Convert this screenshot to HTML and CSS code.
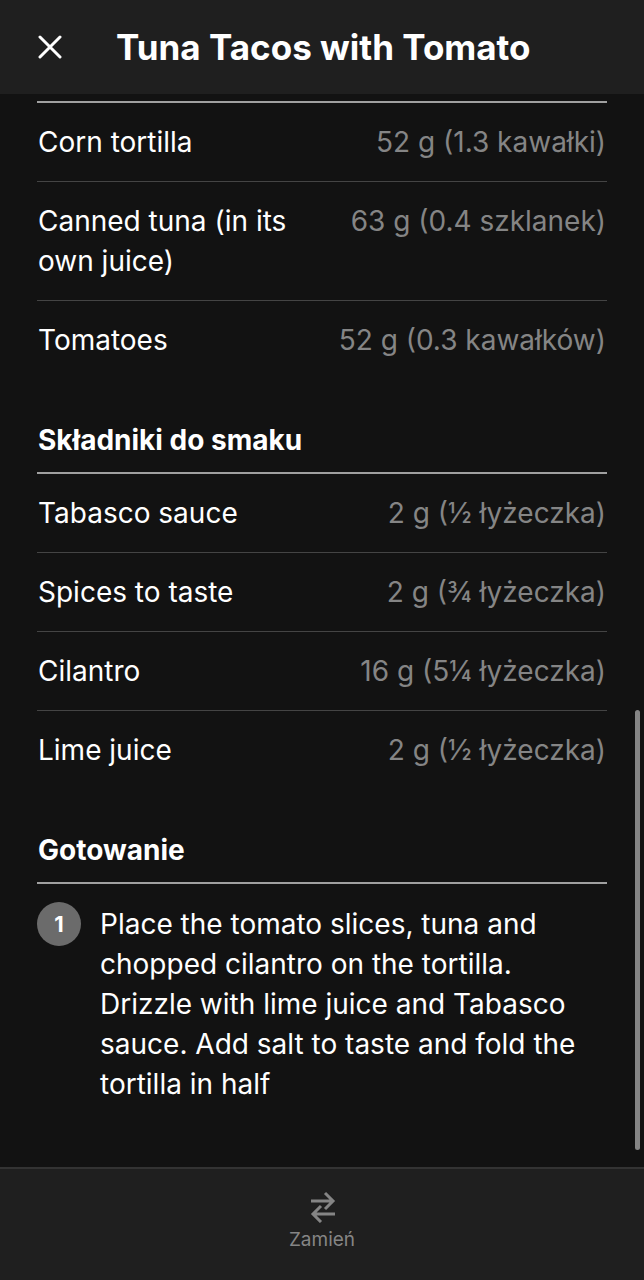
FILE: index.html
```html
<!DOCTYPE html>
<html lang="pl">
<head>
    <meta charset="UTF-8">
    <meta name="viewport" content="width=device-width, initial-scale=1.0">
    <title>Tuna Tacos with Tomato</title>
    <link rel="stylesheet" href="styles.css">
</head>
<body>
    <header class="top-bar">
        <button class="close-btn" type="button" aria-label="Zamknij">
            <svg width="24" height="24" viewBox="0 0 24 24" fill="none" stroke="currentColor" stroke-width="3" stroke-linecap="round">
                <path d="M2 2l20 20M22 2L2 22"/>
            </svg>
        </button>
        <h1>Tuna Tacos with Tomato</h1>
    </header>

    <main class="content">
        <section class="section">
            <table class="ingredients">
                <tr>
                    <td class="name">Corn tortilla</td>
                    <td class="amount">52 g (1.3 kawałki)</td>
                </tr>
                <tr>
                    <td class="name">Canned tuna (in its own juice)</td>
                    <td class="amount">63 g (0.4 szklanek)</td>
                </tr>
                <tr>
                    <td class="name">Tomatoes</td>
                    <td class="amount">52 g (0.3 kawałków)</td>
                </tr>
            </table>
        </section>

        <section class="section">
            <h2>Składniki do smaku</h2>
            <table class="ingredients">
                <tr>
                    <td class="name">Tabasco sauce</td>
                    <td class="amount">2 g (½ łyżeczka)</td>
                </tr>
                <tr>
                    <td class="name">Spices to taste</td>
                    <td class="amount">2 g (¾ łyżeczka)</td>
                </tr>
                <tr>
                    <td class="name">Cilantro</td>
                    <td class="amount">16 g (5¼ łyżeczka)</td>
                </tr>
                <tr>
                    <td class="name">Lime juice</td>
                    <td class="amount">2 g (½ łyżeczka)</td>
                </tr>
            </table>
        </section>

        <section class="section">
            <h2>Gotowanie</h2>
            <div class="step">
                <span class="step-number">1</span>
                <p>Place the tomato slices, tuna and chopped cilantro on the tortilla. Drizzle with lime juice and Tabasco sauce. Add salt to taste and fold the tortilla in half</p>
            </div>
        </section>

        <div class="scroll-thumb"></div>
    </main>

    <footer class="bottom-bar">
        <button class="swap-btn" type="button">
            <svg width="28" height="32" viewBox="0 0 28 32" fill="none" stroke="currentColor" stroke-width="3">
                <path d="M3 10h22M17 2l8 8-8 8"/>
                <path d="M27 23H5M13 15l-8 8 8 8"/>
            </svg>
            <span>Zamień</span>
        </button>
    </footer>
</body>
</html>
```
FILE: styles.css
```css
* {
    box-sizing: border-box;
}
body {
    margin: 0;
    height: 100vh;
    display: flex;
    flex-direction: column;
    background: #121212;
    color: #fff;
    font-family: Inter, "Liberation Sans", sans-serif;
    font-size: 28px;
    line-height: 40px;
}
button {
    padding: 0;
    border: none;
    background: none;
    font-family: inherit;
    cursor: pointer;
}
.top-bar {
    display: flex;
    align-items: center;
    gap: 54px;
    padding: 27px 38px;
    background: #1f1f1f;
}
.close-btn {
    display: flex;
    color: #fff;
}
h1 {
    margin: 0;
    font-size: 35px;
    line-height: 40px;
    font-weight: 700;
}
.content {
    position: relative;
    flex: 1;
    min-height: 0;
    overflow: hidden;
    padding: 7px 37px 0;
}
.section {
    margin-bottom: 41px;
}
h2 {
    margin: 0;
    padding: 0 1px 12px;
    font-size: 28px;
    line-height: 40px;
    font-weight: 700;
}
.ingredients {
    width: 100%;
    border-spacing: 0;
    border-top: 2px solid #a0a0a0;
}
.ingredients td {
    padding: 19px 1px;
    vertical-align: top;
    border-bottom: 1px solid #444;
}
.ingredients tr:last-child td {
    border-bottom: none;
}
.ingredients .name {
    padding-right: 32px;
}
.ingredients .amount {
    color: #858585;
    text-align: right;
    white-space: nowrap;
}
.step {
    display: flex;
    gap: 19px;
    padding-top: 18px;
    border-top: 2px solid #a0a0a0;
}
.step p {
    margin: 2px 0 0;
}
.step-number {
    flex: none;
    width: 44px;
    height: 44px;
    border-radius: 50%;
    background: #6b6b6b;
    font-size: 22px;
    line-height: 44px;
    font-weight: 700;
    text-align: center;
}
.scroll-thumb {
    position: absolute;
    top: 616px;
    right: 4px;
    bottom: 17px;
    width: 5px;
    border-radius: 3px;
    background: #858585;
}
.bottom-bar {
    display: flex;
    justify-content: center;
    padding: 22px 0 28px;
    border-top: 2px solid #333;
    background: #1f1f1f;
}
.swap-btn {
    display: flex;
    flex-direction: column;
    align-items: center;
    gap: 5px;
    color: #858585;
    font-size: 19px;
    line-height: 24px;
}
```
